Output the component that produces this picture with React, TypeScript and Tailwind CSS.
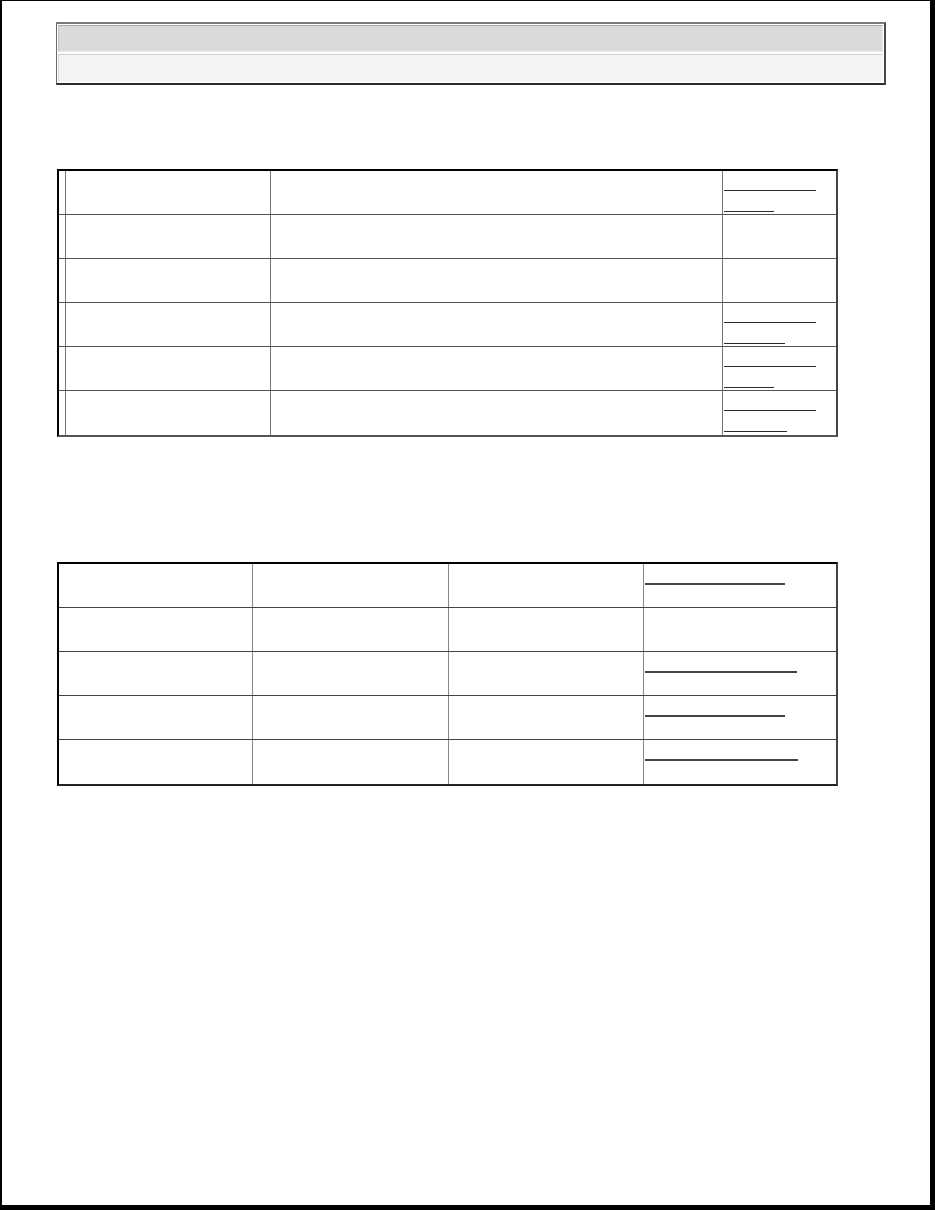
import React from 'react';

// rows for the first table: number of underline widths shown in the last column
const topRows: (number[] | null)[] = [
  [92, 50],
  null,
  null,
  [92, 61],
  [92, 50],
  [92, 63],
];

const bottomRows: (number | null)[] = [140, null, 152, 140, 153];

const LinkLines: React.FC<{ widths: number[] }> = ({ widths }) => (
  <div className="flex flex-col pl-px pt-[19px]">
    <span className="block h-px bg-[#2a2a2a]" style={{ width: widths[0] }} />
    {widths[1] !== undefined && (
      <span className="mt-[20px] block h-px bg-[#2a2a2a]" style={{ width: widths[1] }} />
    )}
  </div>
);

export default function App() {
  return (
    <div className="w-[935px] h-[1210px] bg-white font-['Liberation_Sans',Arial,sans-serif]">
      <div className="h-full w-full border-t border-l-2 border-r-[5px] border-b-[5px] border-black">
        {/* Header block */}
        <div className="ml-[54px] mt-[21px] w-[830px] h-[63px] border-t-2 border-l border-b-2 border-r-2 border-t-[#7a7a7a] border-l-[#6a6a6a] border-b-[#2e2e2e] border-r-[#4a4a4a] p-px flex flex-col gap-[2px]">
          <div className="h-[27px] bg-[#dadada] border border-t-[#a8a8a8] border-l-[#c4c4c4] border-r-[#ececec] border-b-[#ececec]" />
          <div className="flex-1 bg-[#f4f4f4] border border-t-[#cfcfcf] border-l-[#d8d8d8] border-r-[#fafafa] border-b-[#fafafa]" />
        </div>

        {/* First table */}
        <div className="ml-[55px] mt-[84px] w-[781px] border-t-2 border-l-2 border-t-black border-l-black border-r-2 border-b-2 border-r-[#444] border-b-[#555]">
          {topRows.map((row, i) => (
            <div
              key={i}
              className={`grid grid-cols-[7px_205px_452px_113px] h-[44px] ${i < topRows.length - 1 ? 'border-b border-[#555]' : ''}`}
            >
              <div className="border-r border-[#777]" />
              <div className="border-r border-[#777]" />
              <div className="border-r border-[#777]" />
              <div>{row && <LinkLines widths={row} />}</div>
            </div>
          ))}
        </div>

        {/* Second table */}
        <div className="ml-[55px] mt-[125px] w-[781px] border-t-2 border-l-2 border-t-black border-l-black border-r-2 border-b-2 border-r-[#444] border-b-[#222]">
          {bottomRows.map((w, i) => (
            <div
              key={i}
              className={`grid grid-cols-[194px_196px_195px_192px] h-[44px] ${i < bottomRows.length - 1 ? 'border-b border-[#444]' : ''}`}
            >
              <div className="border-r border-[#888]" />
              <div className="border-r border-[#888]" />
              <div className="border-r border-[#888]" />
              <div className="pl-px pt-[19px]">
                {w !== null && <span className="block h-[2px] bg-[#444]" style={{ width: w }} />}
              </div>
            </div>
          ))}
        </div>
      </div>
    </div>
  );
}
